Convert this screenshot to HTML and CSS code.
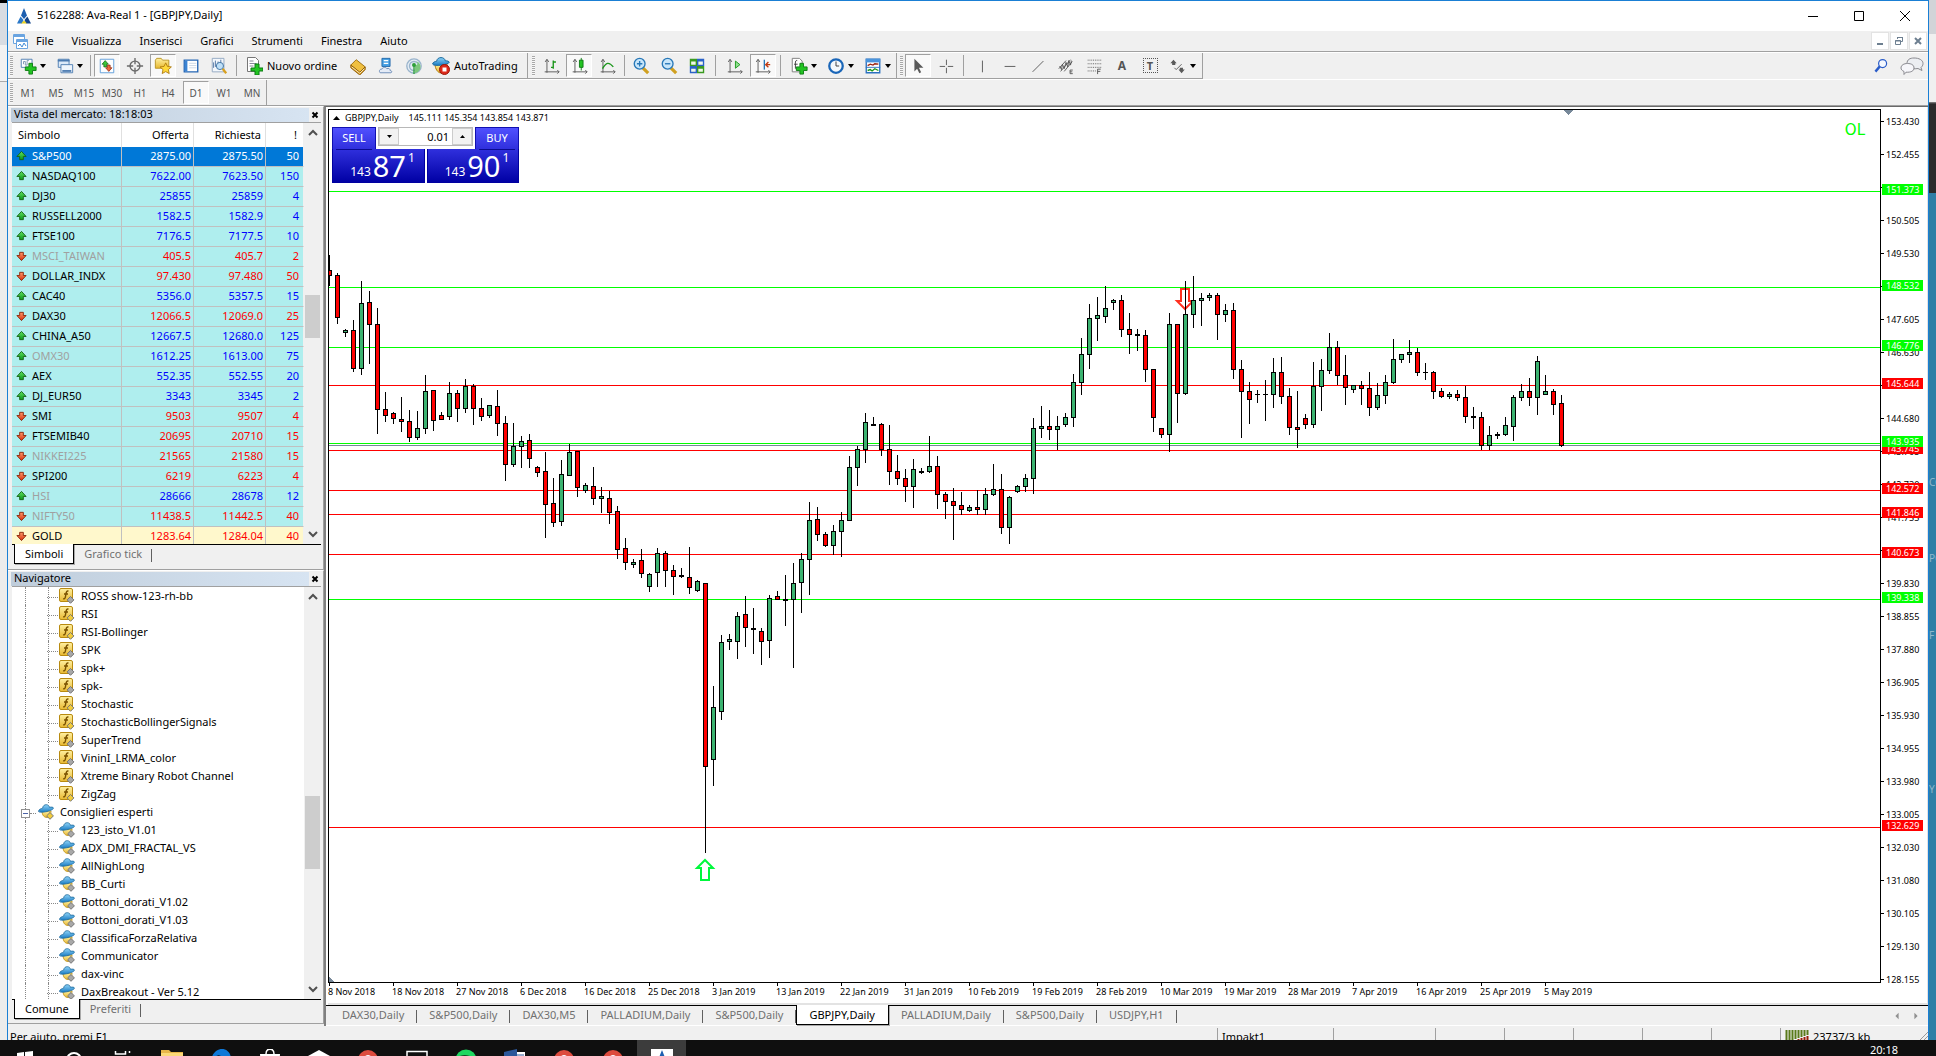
FILE: index.html
```html
<!DOCTYPE html>
<html lang="it">
<head>
<meta charset="utf-8">
<title>5162288: Ava-Real 1 - [GBPJPY,Daily]</title>
<link rel="stylesheet" href="styles.css">
</head>
<body>
<svg class="defs" aria-hidden="true">
  <defs>
    <linearGradient id="g-green" x1="0" y1="0" x2="0" y2="1"><stop offset="0" stop-color="#5fe05f"/><stop offset="1" stop-color="#0a9a1c"/></linearGradient>
    <linearGradient id="g-red" x1="0" y1="0" x2="0" y2="1"><stop offset="0" stop-color="#ff9a6a"/><stop offset="1" stop-color="#d8300c"/></linearGradient>
    <linearGradient id="g-gold" x1="0" y1="0" x2="0" y2="1"><stop offset="0" stop-color="#fff0a0"/><stop offset="1" stop-color="#e8b830"/></linearGradient>
    <linearGradient id="g-blue" x1="0" y1="0" x2="0" y2="1"><stop offset="0" stop-color="#8fd4f8"/><stop offset="1" stop-color="#1a7cc4"/></linearGradient>
  </defs>
  <symbol id="up" viewBox="0 0 12 12"><path d="M6 1 11 6.500H8V10H4V6.500H1z" fill="url(#g-green)" stroke="#146414"/></symbol>
  <symbol id="down" viewBox="0 0 12 12"><path d="M6 11 11 5.500H8V2H4V5.500H1z" fill="url(#g-red)" stroke="#8a2408"/></symbol>
  <symbol id="fx" viewBox="0 0 16 16"><rect x=".5" y=".5" width="13" height="13" rx="1.500" fill="url(#g-gold)" stroke="#b88a10"/><path d="M9.500 3.200C7.800 2.600 7.400 3.800 7.200 5L6.300 9.400C6 10.800 5.200 11 4.200 10.600M5 6h4" fill="none" stroke="#7a5200" stroke-width="1.400"/><path d="M11.500 8.500 14.900 11.900 11.500 15.300 8.100 11.900z" fill="currentColor" stroke="#777"/></symbol>
  <symbol id="ea" viewBox="0 0 16 16"><path d="M4 7C4 12 7 13.500 9 13.500S13 11 13 7z" fill="url(#g-gold)" stroke="#b88a10" stroke-width=".8"/><path d="M.6 7.600C.3 5.500 3 4.600 4.600 4.200 5 1.500 6.600.7 8.200.7s3 .8 3.200 2.600c2-.4 4-.2 4 .8 0 1.400-3 2.600-6.400 3.400S1 8.600.6 7.600z" fill="url(#g-blue)" stroke="#1d6a9c" stroke-width=".8"/><path d="M12 8.500 15.400 11.900 12 15.300 8.600 11.900z" fill="currentColor" stroke="#777"/></symbol>
  <symbol id="ava" viewBox="0 0 16 16"><path d="M8 0 5 7.500 8 11 11 7.500z" fill="#1d5fb0"/><path d="M4.600 8.500 1 15.500H6L7.500 12z" fill="#2a78c8"/><path d="M11.400 8.500 15 15.500H10L8.500 12z" fill="#14468c"/><path d="M5 15.500 8 12.500 11 15.500z" fill="#e8d020"/></symbol>
  <symbol id="chrome" viewBox="0 0 22 22"><circle cx="11" cy="11" r="10" fill="#dd4b3e"/><path d="M1 12a10 10 0 0 0 10 9l4-8-8-3z" fill="#2ea44f"/><path d="M21 9h-9l3 4-4 8a10 10 0 0 0 10-12z" fill="#f6c945"/><circle cx="11" cy="11" r="4.500" fill="#3b7de0" stroke="#fff"/></symbol>
</svg>

<div class="desktop">
  <div class="behind behind-left"></div>
  <main class="window">
    <header class="titlebar">
      <svg class="ic16" viewBox="0 0 16 16"><use href="#ava"/></svg>
      <h1>5162288: Ava-Real 1 - [GBPJPY,Daily]</h1>
      <div class="caption">
        <button aria-label="Riduci"><svg viewBox="0 0 12 12"><path d="M1 6.500h10"/></svg></button>
        <button aria-label="Ingrandisci"><svg viewBox="0 0 12 12"><path d="M1.500 1.500h9v9h-9z"/></svg></button>
        <button aria-label="Chiudi"><svg viewBox="0 0 12 12"><path d="M1 1l10 10M11 1L1 11"/></svg></button>
      </div>
    </header>

    <nav class="menubar">
      <svg class="ic16" viewBox="0 0 16 16"><path d="M1.500 1.500h11v9h-11z" fill="#fff" stroke="#6aa4e0"/><path d="M1 3h12" stroke="#6aa4e0" stroke-width="2"/><path d="M4.500 6.500h11v9h-11z" fill="#fff" stroke="#6aa4e0"/><path d="M4 8h12" stroke="#6aa4e0" stroke-width="2"/><path d="M6 13l2-2 2 3 2-4 2 3" fill="none" stroke="#3f8bd8"/></svg>
      <button>File</button><button>Visualizza</button><button>Inserisci</button><button>Grafici</button><button>Strumenti</button><button>Finestra</button><button>Aiuto</button>
      <div class="mdi">
        <button aria-label="Riduci grafico"><svg viewBox="0 0 10 10"><path d="M2 8h6" stroke-width="2"/></svg></button>
        <button aria-label="Ripristina grafico"><svg viewBox="0 0 10 10"><path d="M3.500 3V1.500h5v4H7M1.500 4.500h5v4h-5zM3 1.500h6M1 5h6"/></svg></button>
        <button aria-label="Chiudi grafico"><svg viewBox="0 0 10 10"><path d="M2 2l6 6M8 2L2 8" stroke-width="2"/></svg></button>
      </div>
    </nav>

    <div class="toolrow">
      <div class="toolbar">
        <i class="grip"></i>
        <button class="tb dd" aria-label="Nuovo grafico"><svg viewBox="0 0 20 20"><path d="M2.500 2.500h12v9h-12z" fill="#fff" stroke="#4a7ab0"/><path d="M5 8V5h2v4h2V4h2" fill="none" stroke="#7b93b0"/><path d="M11 7h4v4h4v4h-4v4h-4v-4H7v-4h4z" fill="#22c322" stroke="#0b7a12"/></svg></button>
        <button class="tb dd" aria-label="Profili"><svg viewBox="0 0 20 20"><path d="M2.500 2.500h12v9h-12z" fill="#dbe9f8" stroke="#4a7ab0"/><path d="M2 4h13" stroke="#4a7ab0" stroke-width="2"/><path d="M5.500 8.500h13v9h-13z" fill="#eef5fc" stroke="#4a7ab0"/><path d="M7 15.500h10" stroke="#4a7ab0" stroke-width="2"/></svg></button>
        <i class="sep sep-s"></i>
        <button class="tb on" aria-label="Vista del mercato"><svg viewBox="0 0 20 20"><path d="M2.500 2.500h15v15h-15z" fill="#fdfeff" stroke="#5a9ad8"/><path d="M8 4l3.500 4H9.500v3h-3V8h-2z" fill="#3ac83a" stroke="#146414" stroke-width=".8"/><path d="M12 16l-3.500-4h2V9h3v3h2z" fill="#f06a40" stroke="#8a2408" stroke-width=".8"/></svg></button>
        <button class="tb" aria-label="Finestra dati"><svg viewBox="0 0 20 20"><g fill="none" stroke="#6b6b6b" stroke-width="1.500"><circle cx="10" cy="10" r="5.500"/><path d="M10 1v7M10 12v7M1 10h7M12 10h7"/></g></svg></button>
        <button class="tb on" aria-label="Navigatore"><svg viewBox="0 0 20 20"><path d="M1.500 3.500 3 1.500h5l1.500 2h7v9h-15z" fill="url(#g-gold)" stroke="#b89220"/><path d="M13 6.500l1.900 4 4.400.5-3.300 3 .9 4.400L13 16.200l-3.900 2.200.9-4.400-3.300-3 4.400-.5z" fill="#ffd83a" stroke="#b07c10"/></svg></button>
        <button class="tb" aria-label="Terminale"><svg viewBox="0 0 20 20"><path d="M2.500 3.500h15v13h-15z" fill="#fff" stroke="#2466b4" stroke-width="1.500"/><path d="M3 4h3v12H3z" fill="#3b84d4"/><path d="M8 7h8M8 9.500h8M8 12h8" stroke="#cad6e4"/></svg></button>
        <button class="tb" aria-label="Strategy Tester"><svg viewBox="0 0 20 20"><path d="M2.500 1.500h13v15h-13z" fill="#f3f7fc" stroke="#8fa5c0"/><path d="M4 12V6m2 5V4m3 8V5m3 3V3" stroke="#4a70a0"/><circle cx="11" cy="10" r="4" fill="#bfe0f8" stroke="#3a6ea0"/><path d="M14 13l4 5" stroke="#d8a020" stroke-width="2.500"/></svg></button>
        <i class="sep sep-m"></i>
        <button class="tb wide"><svg viewBox="0 0 18 18"><path d="M2.500.5h8l3 3v11h-11z" fill="#fff" stroke="#777"/><path d="M4.500 4h4M4.500 6.500h7M4.500 9h4" stroke="#889"/><path d="M10 7h4v4h4v3h-4v4h-4v-4H6v-3h4z" fill="#22c322" stroke="#0b7a12"/></svg>Nuovo ordine</button>
        <button class="tb" aria-label="MetaEditor"><svg viewBox="0 0 20 20"><path d="M2 9l6-6 10 8-6 6z" fill="#f0c040" stroke="#9a6a08"/><path d="M2 9v3l10 8 6-6v-3l-6 6z" fill="#d89a20" stroke="#8a5a08"/><path d="M3 11l9 7 5-5" fill="none" stroke="#fff3c8"/></svg></button>
        <button class="tb" aria-label="Server virtuale"><svg viewBox="0 0 20 20"><path d="M5.500 1.500h9v9h-9z" fill="#4aa2e4" stroke="#1d64a8"/><path d="M7.500 4h5M7.500 7h5" stroke="#fff" stroke-width="1.500"/><path d="M3.500 17.500c-2-2 0-4.500 2-4 1-2.500 4.500-2.500 5.500-.5 2-1 4 .5 3.500 2 2 0 2.500 2 1 2.500z" fill="#e4ebf6" stroke="#6888b4"/></svg></button>
        <button class="tb" aria-label="Segnali"><svg viewBox="0 0 20 20"><g fill="#e4ecf4" stroke="#9ab4cc" stroke-width="1.500"><circle cx="10" cy="10" r="8"/><circle cx="10" cy="10" r="5"/></g><path d="M11 9v9c5-1 7-5 6-9-1-3-3-4-5-4 3 1 3 4-1 4z" fill="#7cc87c"/><circle cx="10" cy="9" r="2.200" fill="#2f9f3a"/><path d="M10 10v9" stroke="#2f9f3a" stroke-width="1.500"/></svg></button>
        <button class="tb wide auto"><svg viewBox="0 0 18 18"><path d="M3 7c0 5 3 9 6 9s6-4 6-9z" fill="url(#g-gold)" stroke="#b07c10"/><path d="M.6 7C1 5 3 4.500 4.600 4.300 5 1.500 7 .6 9 .6s4 1 4.200 3.200c2 0 4 .4 4 1.600C17 7.500 1.500 10 .6 7z" fill="url(#g-blue)" stroke="#1d6a9c"/><circle cx="12.500" cy="12.500" r="5" fill="#dd2a1a" stroke="#9a1408"/><path d="M10.500 10.500h4v4h-4z" fill="#fff"/></svg>AutoTrading</button>
      </div>
      <div class="toolbar second">
        <i class="grip"></i>
        <button class="tb" aria-label="Grafico a barre"><svg viewBox="0 0 20 20"><path d="M5.500 3v14.500M3 16.500h16M3.500 5.500l2-3 2 3M17 14.500l2 2-2 2" class="axis"/><path d="M12.500 4v9M12.500 5.500h3M10 11.500h2.500" fill="none" stroke="#1a961a" stroke-width="1.500"/></svg></button>
        <button class="tb on" aria-label="Candele"><svg viewBox="0 0 20 20"><path d="M5.500 3v14.500M3 16.500h16M3.500 5.500l2-3 2 3M17 14.500l2 2-2 2" class="axis"/><path d="M12.500 1v14" stroke="#0b7a12"/><path d="M10.500 3.500h4v8h-4z" fill="#22c322" stroke="#0b7a12"/></svg></button>
        <button class="tb" aria-label="Linea"><svg viewBox="0 0 20 20"><path d="M5.500 3v14.500M3 16.500h16M3.500 5.500l2-3 2 3M17 14.500l2 2-2 2" class="axis"/><path d="M5 13c4-7 7-8 12-2" fill="none" stroke="#1a961a" stroke-width="1.500"/></svg></button>
        <i class="sep sep-m"></i>
        <button class="tb" aria-label="Ingrandisci"><svg viewBox="0 0 20 20"><path d="M12 12l6 6" stroke="#d0a020" stroke-width="3.500"/><circle cx="8.500" cy="7.500" r="6" fill="#c8e6fa" stroke="#2878b8" stroke-width="1.500"/><path d="M5.500 7.500h6M8.500 4.500v6" stroke="#2878b8" stroke-width="1.500"/></svg></button>
        <button class="tb" aria-label="Riduci"><svg viewBox="0 0 20 20"><path d="M12 12l6 6" stroke="#d0a020" stroke-width="3.500"/><circle cx="8.500" cy="7.500" r="6" fill="#c8e6fa" stroke="#2878b8" stroke-width="1.500"/><path d="M5.500 7.500h6" stroke="#2878b8" stroke-width="1.500"/></svg></button>
        <button class="tb" aria-label="Affianca"><svg viewBox="0 0 20 20"><path d="M2 2h8v8H2zM10 10h8v8h-8z" fill="#3a9a20"/><path d="M10 2h8v8h-8zM2 10h8v8H2z" fill="#2a62c8"/><path d="M3.500 5h5v3.500h-5zM11.500 5h5v3.500h-5zM3.500 13h5v3.500h-5zM11.500 13h5v3.500h-5z" fill="#f0f6ea"/></svg></button>
        <i class="sep sep-l"></i>
        <button class="tb" aria-label="Scorrimento automatico"><svg viewBox="0 0 20 20"><path d="M4.500 3v14.500M2 16.500h16M2.500 5.500l2-3 2 3M16 14.500l2 2-2 2" class="axis"/><path d="M10.500 4.500l5 4-5 4z" fill="#8fe08f" stroke="#1a961a"/></svg></button>
        <button class="tb on" aria-label="Spostamento grafico"><svg viewBox="0 0 20 20"><path d="M4.500 3v14.500M2 16.500h16M2.500 5.500l2-3 2 3M16 14.500l2 2-2 2" class="axis"/><path d="M11.500 3v11" stroke="#2878b8" stroke-width="1.500"/><path d="M18 8.500h-4M16 5.500l-3 3 3 3" fill="none" stroke="#c03a10" stroke-width="1.500"/></svg></button>
        <i class="sep sep-c"></i>
        <button class="tb dd" aria-label="Indicatori"><svg viewBox="0 0 20 20"><path d="M2.500 1.500h8l3 3v12h-11z" fill="#fff" stroke="#777"/><path d="M8 4c-2-.5-2 1-2 3v6M4.500 8h4" fill="none" stroke="#333"/><path d="M11 7h4v4h4v4h-4v4h-4v-4H7v-4h4z" fill="#22c322" stroke="#0b7a12"/></svg></button>
        <button class="tb dd" aria-label="Periodi"><svg viewBox="0 0 20 20"><circle cx="10" cy="10" r="7.500" fill="#f4f8fc" stroke="#1a66b8" stroke-width="2.500"/><path d="M10 5v5h3.500" fill="none" stroke="#333"/></svg></button>
        <button class="tb dd" aria-label="Modelli"><svg viewBox="0 0 20 20"><path d="M2.500 2.500h15v15h-15z" fill="#fff" stroke="#2a70c0" stroke-width="1.500"/><path d="M2 4h16" stroke="#4a94dc" stroke-width="4"/><path d="M4 9.500l3-1.500 3 1 2-1.500 4 .5" fill="none" stroke="#9a2410" stroke-width="1.500"/><path d="M2 11.500h16" stroke="#2a70c0"/><path d="M4 15l3-1 2 1.500 3-2.500 4 2" fill="none" stroke="#1a961a" stroke-width="1.500"/></svg></button>
      </div>
      <div class="toolbar third">
        <i class="grip"></i>
        <button class="tb on" aria-label="Cursore"><svg viewBox="0 0 20 20"><path d="M6 2v14l3-3 2.500 5 2-1-2.500-5h5z" fill="#5a5a5a"/></svg></button>
        <button class="tb" aria-label="Mirino"><svg viewBox="0 0 20 20"><path d="M10.500 3v6M10.500 12v6M3 10.500h6M12 10.500h6" class="axis"/></svg></button>
        <i class="sep sep-c"></i>
        <button class="tb" aria-label="Linea verticale"><svg viewBox="0 0 20 20"><path d="M10.500 4v13" class="axis"/></svg></button>
        <button class="tb" aria-label="Linea orizzontale"><svg viewBox="0 0 20 20"><path d="M4 10.500h12" class="axis"/></svg></button>
        <button class="tb" aria-label="Trendline"><svg viewBox="0 0 20 20"><path d="M4 16.500 16 4.500" class="axis"/></svg></button>
        <button class="tb" aria-label="Canale"><svg viewBox="0 0 20 20"><path d="M2 13 10 4M4 16 15 3M8 16l9-11M3 10l2 4 1-6 2 5 2-7 2 5 1-7 2 5 1-5" class="axis"/><path d="M17.500 14.500h-3v4h3M14.500 16.500H17" class="axis"/></svg></button>
        <button class="tb" aria-label="Fibonacci"><svg viewBox="0 0 20 20"><path d="M3 3.500h15M3 7.500h15M3 11.500h15M3 15.500h9" stroke="#555" stroke-dasharray="1 1"/><path d="M17.500 13.500h-3.500v5.500M14 16h3" class="axis"/></svg></button>
        <button class="tb letter" aria-label="Testo">A</button>
        <button class="tb letter boxed" aria-label="Etichetta"><span>T</span></button>
        <button class="tb dd tail" aria-label="Frecce"><svg viewBox="0 0 20 20"><path d="M5 3l3.500 4H7v2H3.500V7H1.500zM14 18l-3.500-4H12v-2h3.500v2h2z" fill="#5a5a5a"/><path d="M6 12l2 2 6-6" class="axis"/></svg></button>
      </div>
      <div class="tool-right">
        <svg class="ic16" viewBox="0 0 20 20"><circle cx="12" cy="7" r="5" fill="#f4f8ff" stroke="#2a5cc8" stroke-width="1.500"/><path d="M8.500 10.500 3 17" stroke="#2a5cc8" stroke-width="3"/></svg>
        <svg class="ic24" viewBox="0 0 24 20"><path d="M14 2c5 0 9 2 9 5.500 0 2-1 3-2 4l1 3-4-2c-6 1-11-1-11-5S10 2 14 2z" fill="#eceef2" stroke="#8a8a90"/><path d="M7.500 7.500c4 0 6.500 1.500 6.500 4.500s-3 4.500-8 4.200L4 18.500v-3C2 14.500 1 13.500 1 12c0-3 3-4.500 6.500-4.500z" fill="#f6f6fa" stroke="#8a8a90"/></svg>
      </div>
    </div>

    <div class="toolrow frames">
      <div class="toolbar">
        <i class="grip"></i>
        <button class="tf">M1</button><button class="tf">M5</button><button class="tf">M15</button><button class="tf">M30</button><button class="tf">H1</button><button class="tf">H4</button><button class="tf on">D1</button><button class="tf">W1</button><button class="tf">MN</button>
      </div>
    </div>

    <div class="workspace">
      <aside class="side">
        <section class="panel market">
          <h2><span>Vista del mercato: 18:18:03</span><button aria-label="Chiudi vista del mercato"><svg viewBox="0 0 8 8"><path d="M1.500 1.500l5 5M6.500 1.500l-5 5"/></svg></button></h2>
          <div class="scrollbox">
            <table>
              <colgroup><col class="c-sym"><col class="c-num"><col class="c-num"><col></colgroup>
              <thead><tr><th>Simbolo</th><th>Offerta</th><th>Richiesta</th><th>!</th></tr></thead>
              <tbody>
                <tr class="u sel"><td><svg><use href="#up"/></svg>S&amp;P500</td><td>2875.00</td><td>2875.50</td><td>50</td></tr>
                <tr class="u"><td><svg><use href="#up"/></svg>NASDAQ100</td><td>7622.00</td><td>7623.50</td><td>150</td></tr>
                <tr class="u"><td><svg><use href="#up"/></svg>DJ30</td><td>25855</td><td>25859</td><td>4</td></tr>
                <tr class="u"><td><svg><use href="#up"/></svg>RUSSELL2000</td><td>1582.5</td><td>1582.9</td><td>4</td></tr>
                <tr class="u"><td><svg><use href="#up"/></svg>FTSE100</td><td>7176.5</td><td>7177.5</td><td>10</td></tr>
                <tr class="d off"><td><svg><use href="#down"/></svg>MSCI_TAIWAN</td><td>405.5</td><td>405.7</td><td>2</td></tr>
                <tr class="d"><td><svg><use href="#down"/></svg>DOLLAR_INDX</td><td>97.430</td><td>97.480</td><td>50</td></tr>
                <tr class="u"><td><svg><use href="#up"/></svg>CAC40</td><td>5356.0</td><td>5357.5</td><td>15</td></tr>
                <tr class="d"><td><svg><use href="#down"/></svg>DAX30</td><td>12066.5</td><td>12069.0</td><td>25</td></tr>
                <tr class="u"><td><svg><use href="#up"/></svg>CHINA_A50</td><td>12667.5</td><td>12680.0</td><td>125</td></tr>
                <tr class="u off"><td><svg><use href="#up"/></svg>OMX30</td><td>1612.25</td><td>1613.00</td><td>75</td></tr>
                <tr class="u"><td><svg><use href="#up"/></svg>AEX</td><td>552.35</td><td>552.55</td><td>20</td></tr>
                <tr class="u"><td><svg><use href="#up"/></svg>DJ_EUR50</td><td>3343</td><td>3345</td><td>2</td></tr>
                <tr class="d"><td><svg><use href="#down"/></svg>SMI</td><td>9503</td><td>9507</td><td>4</td></tr>
                <tr class="d"><td><svg><use href="#down"/></svg>FTSEMIB40</td><td>20695</td><td>20710</td><td>15</td></tr>
                <tr class="d off"><td><svg><use href="#down"/></svg>NIKKEI225</td><td>21565</td><td>21580</td><td>15</td></tr>
                <tr class="d"><td><svg><use href="#down"/></svg>SPI200</td><td>6219</td><td>6223</td><td>4</td></tr>
                <tr class="u off"><td><svg><use href="#up"/></svg>HSI</td><td>28666</td><td>28678</td><td>12</td></tr>
                <tr class="d off"><td><svg><use href="#down"/></svg>NIFTY50</td><td>11438.5</td><td>11442.5</td><td>40</td></tr>
                <tr class="d gold"><td><svg><use href="#down"/></svg>GOLD</td><td>1283.64</td><td>1284.04</td><td>40</td></tr>
              </tbody>
            </table>
            <div class="scroll"><svg viewBox="0 0 10 8"><path d="M1 6l4-4 4 4"/></svg><i class="thumb"></i><svg viewBox="0 0 10 8"><path d="M1 2l4 4 4-4"/></svg></div>
          </div>
          <div class="tabs"><button class="active">Simboli</button><button>Grafico tick</button></div>
        </section>

        <section class="panel nav">
          <h2><span>Navigatore</span><button aria-label="Chiudi navigatore"><svg viewBox="0 0 8 8"><path d="M1.500 1.500l5 5M6.500 1.500l-5 5"/></svg></button></h2>
          <div class="scrollbox">
            <ul class="tree">
              <li class="grey"><svg><use href="#fx"/></svg>ROSS show-123-rh-bb</li>
              <li><svg><use href="#fx"/></svg>RSI</li>
              <li><svg><use href="#fx"/></svg>RSI-Bollinger</li>
              <li class="grey"><svg><use href="#fx"/></svg>SPK</li>
              <li class="grey"><svg><use href="#fx"/></svg>spk+</li>
              <li class="grey"><svg><use href="#fx"/></svg>spk-</li>
              <li><svg><use href="#fx"/></svg>Stochastic</li>
              <li><svg><use href="#fx"/></svg>StochasticBollingerSignals</li>
              <li class="grey"><svg><use href="#fx"/></svg>SuperTrend</li>
              <li class="grey"><svg><use href="#fx"/></svg>VininI_LRMA_color</li>
              <li class="grey"><svg><use href="#fx"/></svg>Xtreme Binary Robot Channel</li>
              <li><svg><use href="#fx"/></svg>ZigZag</li>
              <li class="parent"><button aria-label="Comprimi"></button><svg><use href="#ea"/></svg>Consiglieri esperti</li>
              <li class="grey"><svg><use href="#ea"/></svg>123_isto_V1.01</li>
              <li class="grey"><svg><use href="#ea"/></svg>ADX_DMI_FRACTAL_VS</li>
              <li class="grey"><svg><use href="#ea"/></svg>AllNighLong</li>
              <li class="grey"><svg><use href="#ea"/></svg>BB_Curti</li>
              <li class="grey"><svg><use href="#ea"/></svg>Bottoni_dorati_V1.02</li>
              <li class="grey"><svg><use href="#ea"/></svg>Bottoni_dorati_V1.03</li>
              <li class="grey"><svg><use href="#ea"/></svg>ClassificaForzaRelativa</li>
              <li class="grey"><svg><use href="#ea"/></svg>Communicator</li>
              <li class="grey"><svg><use href="#ea"/></svg>dax-vinc</li>
              <li class="grey"><svg><use href="#ea"/></svg>DaxBreakout - Ver 5.12</li>
            </ul>
            <div class="scroll"><svg viewBox="0 0 10 8"><path d="M1 6l4-4 4 4"/></svg><i class="thumb"></i><svg viewBox="0 0 10 8"><path d="M1 2l4 4 4-4"/></svg></div>
          </div>
          <div class="tabs"><button class="active">Comune</button><button>Preferiti</button></div>
        </section>
      </aside>

      <section class="charts">
        <div class="chart">
          <div class="plot">
            <svg class="canvas">
              <g class="levels">
                <path class="lv-g" d="M0 81.500h4000M0 177.500h4000M0 237.500h4000M0 333.500h4000M0 489.500h4000"/>
                <path class="lv-b" d="M0 335.500h4000"/>
                <path class="lv-r" d="M0 275.500h4000M0 340.500h4000M0 380.500h4000M0 404.500h4000M0 444.500h4000M0 717.500h4000"/>
              </g>
              <path class="sell-mark" d="M852 179h8v12h4l-8 8-8-8h4z"/>
              <path class="ink" id="ink"/><path class="bear" id="bear"/><path class="bull" id="bull"/>
              <path class="buy-mark" d="M372 770h8v-12h4l-8-8-8 8h4z"/>
              <path class="shift" d="M1234 0h10l-5 5zM0 867l5 5H0z"/>
            </svg>
            <div class="ohlc"><svg viewBox="0 0 7 4"><path d="M0 4 3.500 0 7 4z"/></svg><span>GBPJPY,Daily</span><span>145.111 145.354 143.854 143.871</span></div>
            <form class="oneclick">
              <button type="button" class="side-btn">SELL</button>
              <div class="lots">
                <button type="button" aria-label="Diminuisci"><svg viewBox="0 0 7 4"><path d="M1 0h5L3.500 3z"/></svg></button>
                <input aria-label="Volume" value="0.01">
                <button type="button" aria-label="Aumenta"><svg viewBox="0 0 7 4"><path d="M1 3h5L3.500 0z"/></svg></button>
              </div>
              <button type="button" class="side-btn">BUY</button>
              <div class="quote"><small>143</small><b>87</b><sup>1</sup></div>
              <div class="quote"><small>143</small><b>90</b><sup>1</sup></div>
            </form>
            <strong class="ol">OL</strong>
          </div>
          <div class="prices">
            <ol>
              <li>153.430</li><li>152.455</li><li>151.480</li><li>150.505</li><li>149.530</li><li>148.555</li><li>147.605</li><li>146.630</li><li>145.655</li><li>144.680</li><li>143.705</li><li>142.730</li><li>141.755</li><li>140.780</li><li>139.830</li><li>138.855</li><li>137.880</li><li>136.905</li><li>135.930</li><li>134.955</li><li>133.980</li><li>133.005</li><li>132.030</li><li>131.080</li><li>130.105</li><li>129.130</li><li>128.155</li>
            </ol>
            <span class="tag g" style="top:75px">151.373</span>
            <span class="tag g" style="top:171px">148.532</span>
            <span class="tag g" style="top:231px">146.776</span>
            <span class="tag r" style="top:269px">145.644</span>
            <span class="tag r" style="top:334px">143.745</span>
            <span class="tag g" style="top:327px">143.935</span>
            <span class="tag r" style="top:374px">142.572</span>
            <span class="tag r" style="top:398px">141.846</span>
            <span class="tag r" style="top:438px">140.673</span>
            <span class="tag g" style="top:483px">139.338</span>
            <span class="tag r" style="top:711px">132.629</span>
          </div>
          <ol class="dates">
            <li>8 Nov 2018</li><li>18 Nov 2018</li><li>27 Nov 2018</li><li>6 Dec 2018</li><li>16 Dec 2018</li><li>25 Dec 2018</li><li>3 Jan 2019</li><li>13 Jan 2019</li><li>22 Jan 2019</li><li>31 Jan 2019</li><li>10 Feb 2019</li><li>19 Feb 2019</li><li>28 Feb 2019</li><li>10 Mar 2019</li><li>19 Mar 2019</li><li>28 Mar 2019</li><li>7 Apr 2019</li><li>16 Apr 2019</li><li>25 Apr 2019</li><li>5 May 2019</li>
          </ol>
        </div>
        <div class="tabs chart-tabs">
          <button>DAX30,Daily</button><button>S&amp;P500,Daily</button><button>DAX30,M5</button><button>PALLADIUM,Daily</button><button>S&amp;P500,Daily</button><button class="active">GBPJPY,Daily</button><button>PALLADIUM,Daily</button><button>S&amp;P500,Daily</button><button>USDJPY,H1</button>
          <span class="tabscroll"><svg viewBox="0 0 5 8"><path d="M4.500 0v8L.5 4z"/></svg><svg viewBox="0 0 5 8"><path d="M.5 0v8l4-4z"/></svg></span>
        </div>
      </section>
    </div>

    <footer class="status">
      <span class="help">Per aiuto, premi F1</span><span class="s3">Impakt1</span><span class="s2"></span><span class="s1"></span><span class="s1"></span><span class="s1"></span><span class="s1"></span><span class="s1"></span>
      <span class="net"><svg viewBox="0 0 24 12"><path d="M1.500 0v12M4.500 0v12M7.500 0v10M10.500 0v9M13.500 0v8M16.500 0v7M19.500 0v6M22.500 0v5" stroke="#5a7a1a" stroke-width="2"/><path d="M7.500 11v1M10.500 10v2M13.500 9v3M16.500 8v4M19.500 7v5M22.500 6v6" stroke="#9a1c08" stroke-width="2"/></svg>23737/3 kb</span>
      <svg class="sizer" viewBox="0 0 10 8"><path d="M1 9 10 0M5 9l5-5" stroke="#999" fill="none"/></svg>
    </footer>
  </main>
  <div class="behind behind-right"><span style="top:474px">CC</span><span style="top:550px">PC</span><span style="top:627px">F</span><span style="top:781px">Y</span></div>
</div>

<div class="taskbar">
  <button aria-label="Start"><svg viewBox="0 0 22 22"><path d="M3 4l7-1v8H3zM11 3l8-1v9h-8zM3 12h7v8l-7-1zM11 12h8v9l-8-1z" fill="#fff"/></svg></button>
  <button aria-label="Cerca"><svg viewBox="0 0 22 22"><circle cx="11" cy="11" r="7" fill="none" stroke="#fff" stroke-width="2"/></svg></button>
  <button aria-label="Visualizzazione attività"><svg viewBox="0 0 22 22"><path d="M3.500 2v3h10V2M17.500 2v2M17.500 7v12M3.500 8.500h10v8h-10z" fill="none" stroke="#fff" stroke-width="1.500"/></svg></button>
  <button aria-label="Esplora file"><svg viewBox="0 0 22 22"><path d="M0 1h8l2 2h12v18H0z" fill="#e8b64a"/><path d="M0 4h22v17H0z" fill="#fbd878"/></svg></button>
  <button aria-label="Edge"><svg viewBox="0 0 22 22"><path d="M1 12C2 4 7 0 12 0s9 4 9 10v3H8c1 5 8 5 12 2v5C10 24 2 20 4 12c1-3 4-5 7-6-5 0-8 3-10 6z" fill="#0f78d7"/></svg></button>
  <button aria-label="Store"><svg viewBox="0 0 22 22"><path d="M7 5C7-1.500 15-1.500 15 5" fill="none" stroke="#fff" stroke-width="1.500"/><path d="M1 5h20l-1 15H2z" fill="#fff"/></svg></button>
  <button aria-label="Dropbox"><svg viewBox="0 0 22 22"><path d="M11 1 22 7 11 14 0 7z" fill="#fff"/></svg></button>
  <button aria-label="Chrome"><svg viewBox="0 0 22 22"><use href="#chrome"/></svg></button>
  <button aria-label="Desktop remoto"><svg viewBox="0 0 22 22"><path d="M1 2.500h20v14H1z" fill="#111" stroke="#fff" stroke-width="1.500"/></svg></button>
  <button aria-label="Spotify"><svg viewBox="0 0 22 22"><circle cx="11" cy="11" r="10.500" fill="#1ed760"/><path d="M5 8c4-1.500 8-1 12 1" fill="none" stroke="#111" stroke-width="2"/></svg></button>
  <button aria-label="Word"><svg viewBox="0 0 22 22"><path d="M12 3h9v16h-9z" fill="#fff"/><path d="M12 6h8M12 9h8" stroke="#2b579a"/><path d="M0 3 13 0v22L0 19z" fill="#2b579a"/><path d="M3 8l2 7 2-6 2 6 2-7" fill="none" stroke="#fff" stroke-width="1.500"/></svg></button>
  <button aria-label="Chrome profilo 2"><svg viewBox="0 0 22 22"><use href="#chrome"/></svg></button>
  <button aria-label="Chrome profilo 3"><svg viewBox="0 0 22 22"><use href="#chrome"/></svg></button>
  <button class="current" aria-label="MetaTrader"><svg viewBox="0 0 22 22"><path d="M0 0h22v22H0z" fill="#fff"/><path d="M11 1 7 11l4 4 4-4z" fill="#1d5fb0"/></svg></button>
  <time>20:18</time>
</div>
<script src="chart.js"></script>
</body>
</html>
```
FILE: styles.css
```css
* { box-sizing: border-box; margin: 0; padding: 0; }
:root { --ui: "Noto Sans", "Open Sans", sans-serif; --face: #f0f0f0; --line: #a0a0a0; }
body { height: 100vh; display: flex; flex-direction: column; overflow: hidden; font: 11px/16px var(--ui); color: #000; background: #0f0f0f; }
button, input { font: inherit; color: inherit; background: none; border: 0; white-space: nowrap; }
ol, ul { list-style: none; }
svg { flex: none; display: block; }
.defs { position: absolute; width: 0; height: 0; }
.ic16 { width: 16px; height: 16px; }
.ic24 { width: 24px; height: 20px; }

.desktop { flex: 1; min-height: 0; display: flex; overflow: hidden; }
.behind { width: 7px; position: relative; overflow: hidden; }
.behind-left { background: linear-gradient(#000 3px, #d8dce2 3px, #d8dce2 45px, #f2f2f2 45px, #f2f2f2 81px, #aaa 81px, #aaa 82px, #ececec 82px); }
.behind-right { background: linear-gradient(#d2d4d8 34px, #f0f0f0 34px, #f0f0f0 102px, #8c8c8c 102px, #2b2b2b 104px, #2b2b2b 193px, #2f7fa6 193px); color: #8fb8cc; }
.behind-right span { position: absolute; left: 0; font-size: 10px; }
.window { flex: 1; min-width: 0; display: flex; flex-direction: column; background: var(--face); border: 1px solid #1a7fd4; border-bottom: 0; }

.titlebar { height: 30px; display: flex; align-items: center; gap: 5px; padding-left: 8px; background: #fff; }
.titlebar h1 { flex: 1; font-size: 11px; font-weight: 400; line-height: 14px; padding-bottom: 2px; }
.caption { display: flex; }
.caption button { width: 46px; height: 28px; display: grid; place-items: center; }
.caption svg { width: 12px; height: 12px; fill: none; stroke: #000; }

.menubar { height: 21px; display: flex; align-items: center; padding-left: 4px; border-bottom: 1px solid var(--line); }
.menubar > button { padding: 0 9px; }
.menubar > .ic16 { margin-right: -1px; }
.mdi { margin-left: auto; display: flex; gap: 1px; padding-right: 1px; }
.mdi button { width: 18px; height: 18px; display: grid; place-items: center; background: #fff; border: 1px solid #e3e3e3; }
.mdi svg { width: 10px; height: 10px; fill: none; stroke: #6d7f90; }

.toolrow { height: 27px; display: flex; border-top: 1px solid #fff; }
.toolbar { display: flex; align-items: center; padding-left: 2px; border-right: 1px solid var(--line); border-bottom: 1px solid var(--line); }
.grip { width: 3px; height: 20px; margin-right: 1px; background: repeating-linear-gradient(#a8a8a8 0 1px, #f8f8f8 1px 2px); }
.second { padding-left: 4px; }
.second .grip { margin-right: 2px; }
.third { padding-left: 3px; }
.tb { width: 26px; height: 23px; margin: 0 1px; display: grid; place-items: center; }
.tb svg { width: 18px; height: 18px; }
.axis { fill: none; stroke: #555; }
.on { background: #f9f9f9; border: 1px solid #fff; border-top-color: var(--line); border-left-color: var(--line); }
.dd { width: 36px; margin-right: 0; display: flex; align-items: center; padding-left: 4px; gap: 3px; }
.dd::after { content: ""; border: 3px solid transparent; border-top: 4px solid #000; border-bottom: 0; }
.dd.tail { width: 37px; }
.wide { width: 103px; display: flex; align-items: center; gap: 4px; padding-left: 5px; }
.auto { width: 97px; padding-left: 3px; }
.sep { width: 1px; height: 21px; background: var(--line); }
.sep-s { margin: 0 2px; }
.sep-m { margin: 0 2px 0 3px; }
.sep-l { margin: 0 5px 0 4px; }
.sep-c { margin: 0 4px 0 3px; }
.letter { color: #555; font-weight: 700; font-size: 12px; }
.boxed span { width: 15px; height: 15px; line-height: 13px; font-size: 11px; border: 1px dotted #555; }
.tool-right { margin-left: auto; display: flex; align-items: center; gap: 11px; padding-right: 4px; }
.frames { height: 26px; }
.frames .toolbar { border-bottom: 0; }
.tf { width: 26px; height: 23px; margin: 0 1px; font-size: 10px; color: #555; }

.workspace { flex: 1; min-height: 0; display: flex; border-top: 1px solid var(--line); }
.side { width: 316px; display: flex; flex-direction: column; }
.panel { display: flex; flex-direction: column; padding: 1px 2px 0 3px; border-right: 1px solid var(--line); border-bottom: 1px solid var(--line); border-top: 1px solid #fff; }
.market { height: 464px; }
.nav { flex: 1; min-height: 0; margin-bottom: 2px; }
.panel h2 { height: 14px; display: flex; align-items: center; justify-content: space-between; font-weight: 400; font-size: 11px; line-height: 12px; }
.panel h2 span { flex: 1; height: 14px; padding-left: 3px; background: linear-gradient(90deg, #bfcddb, #d7e4f2); }
.panel h2 button { width: 12px; height: 14px; display: grid; place-items: center; }
.panel h2 svg { width: 8px; height: 8px; stroke: #000; stroke-width: 2; }
.scrollbox { flex: 1; min-height: 0; display: flex; overflow: hidden; margin-left: 1px; border-top: 1px solid var(--line); background: #fff; }
.scroll { width: 17px; display: flex; flex-direction: column; align-items: center; padding: 6px 0; background: var(--face); }
.scroll svg { width: 10px; height: 8px; fill: none; stroke: #505050; stroke-width: 2; }
.thumb { width: 15px; margin-bottom: auto; background: #cdcdcd; }
.market .thumb { height: 43px; margin-top: 158px; }
.nav .thumb { height: 73px; margin-top: 195px; }

table { flex: 1; align-self: flex-start; table-layout: fixed; border-collapse: separate; border-spacing: 0; }
.c-sym { width: 110px; }
.c-num { width: 72px; }
th { height: 24px; font-weight: 400; text-align: right; padding-right: 4px; border-right: 1px solid #e0e0e0; }
th:first-child { text-align: left; padding-left: 6px; }
td { height: 20px; line-height: 16px; text-align: right; padding: 0 2px 1px 0; white-space: nowrap; background: #afeeee; border-right: 1px solid #c0c0c0; border-bottom: 1px solid #c0c0c0; }
td:last-child, th:last-child { padding-right: 4px; border-right-color: #f0f0f0; }
th:last-child { padding-right: 6px; }
td:first-child { display: flex; align-items: center; gap: 5px; padding-left: 4px; }
td svg { width: 11px; height: 12px; }
.u td { color: #00f; }
.d td { color: #f00; }
tr td:first-child { color: #000; }
tr.off td:first-child { color: #a0a0a0; }
tr.sel td, tr.sel td:first-child { background: #0078d7; color: #fff; }
.gold td { background: #fff8cc; }

.tabs { display: flex; border-top: 1px solid #000; }
.tabs button { height: 18px; line-height: 16px; padding: 0 10px; color: #707070; position: relative; }
.tabs button:not(.active)::after { content: ""; position: absolute; right: 0; top: 4px; height: 13px; border-right: 1px solid #606060; }
.tabs .active { margin-top: -1px; height: 20px; color: #000; background: #fff; border: 1px solid #000; border-top: 0; box-shadow: 1px 1px #aaa; }
.panel .tabs { margin-left: 1px; padding-left: 2px; height: 24px; }
.market .tabs { height: 25px; }

.tree { flex: 1; }
.tree li { height: 18px; display: flex; align-items: center; gap: 6px; padding-left: 47px; position: relative; white-space: nowrap; }
.tree svg { width: 16px; height: 16px; color: #f2cc3a; }
.tree .grey svg { color: #a8a8a8; }
.tree li::before { content: ""; position: absolute; left: 13px; width: 22px; top: 0; bottom: 0; border: dotted #888; border-width: 0 1px; }
.tree li::after { content: ""; position: absolute; left: 35px; width: 11px; top: 10px; border-top: 1px dotted #888; }
.tree .parent { padding-left: 26px; }
.tree .parent::before { border-right: 0; }
.tree .parent::after { left: 18px; width: 6px; }
.tree .parent button { position: absolute; left: 9px; top: 6px; width: 9px; height: 9px; border: 1px solid #919191; background: linear-gradient(#4b63a7, #4b63a7) center / 5px 1px no-repeat #fff; z-index: 1; }

.charts { flex: 1; min-width: 0; display: flex; flex-direction: column; border-left: 2px solid #808080; border-top: 1px solid #696969; }
.chart { flex: 1; min-height: 0; display: grid; grid-template: 1fr 22px / 1fr 46px; padding: 2px 0 0 2px; background: #fff; border-right: 1px solid #e3e3e3; }
.plot { position: relative; overflow: hidden; border: 1px solid #000; }
.canvas { width: 100%; height: 100%; shape-rendering: crispEdges; }
.levels path { fill: none; }
.lv-g { stroke: #0f0; }
.lv-r { stroke: #f00; }
.lv-b { stroke: #778899; }
.ink { fill: #000; }
.bear { fill: #f00; }
.bull { fill: #3cb371; }
.sell-mark { fill: #fff; stroke: #ff3020; stroke-width: 2; shape-rendering: auto; }
.buy-mark { fill: none; stroke: #00f83c; stroke-width: 2; shape-rendering: auto; }
.shift { fill: #778899; }
.ohlc { position: absolute; left: 4px; top: 2px; display: flex; align-items: center; gap: 6px; font-size: 9px; line-height: 12px; }
.ohlc svg { width: 7px; height: 4px; margin-right: -1px; }
.ohlc span:last-child { padding-left: 4px; }
.oneclick { position: absolute; left: 3px; top: 17px; width: 187px; display: grid; grid-template: 22px 34px / 1fr 92px; column-gap: 2px; color: #fff; }
.side-btn { width: 44px; grid-row: 1; background: linear-gradient(#5050ff, #3030dd); border: 1px solid #1010b0; border-bottom: 0; position: relative; z-index: 1; line-height: 18px; padding-bottom: 2px; }
.side-btn:nth-of-type(1) { grid-column: 1; }
form > .side-btn ~ .side-btn { grid-column: 2; justify-self: end; }
.side-btn::after { content: ""; position: absolute; left: 3px; right: 3px; bottom: -1px; border-bottom: 1px solid #0a0a90; }
.lots { grid-area: 1 / 1 / 2 / 3; justify-self: center; width: 95px; height: 19px; display: flex; background: #fff; border: 1px solid #b8b8b8; color: #000; }
.lots button { width: 20px; display: grid; place-items: center; background: #f2f2f2; border: 1px solid #ccc; }
.lots svg { width: 7px; height: 4px; }
.lots input { flex: 1; min-width: 0; text-align: right; padding-right: 3px; }
.quote { display: flex; align-items: flex-end; justify-content: center; gap: 2px; height: 34px; line-height: 34px; padding: 0 0 0 8px; background: linear-gradient(#3030dd, #0000a4); border: 1px solid #0000a0; border-top: 0; }
.quote small { font-size: 12px; line-height: 20px; }
.quote b { font-size: 29px; font-weight: 400; line-height: 32px; }
.quote sup { font-size: 12px; line-height: 18px; align-self: flex-start; }
.ol { position: absolute; right: 15px; top: 11px; color: #0f0; font: 15px/18px "DejaVu Sans", sans-serif; }

.prices { position: relative; overflow: hidden; font-size: 9px; }
.prices ol { margin-top: -4px; }
.prices li { height: 33px; line-height: 33px; padding-left: 5px; background: linear-gradient(#000, #000) 0 50% / 3px 1px no-repeat; }
.tag { position: absolute; left: 1px; width: 41px; height: 11px; line-height: 12px; padding-left: 4px; color: #fff; }
.tag.g { background: #0f0; }
.tag.r { background: #f00; }
.dates { grid-column: 1 / 3; display: flex; overflow: hidden; font-size: 9px; border-bottom: 2px solid #e3e3e3; }
.dates li { flex: none; width: 64px; white-space: nowrap; line-height: 18px; background: linear-gradient(#000, #000) 1px 0 / 1px 3px no-repeat; }
.chart-tabs { height: 21px; padding-left: 4px; border-bottom: 1px solid #fff; }
.chart-tabs button { padding: 0 13px 0 12px; }
.tabscroll { margin-left: auto; display: flex; gap: 15px; align-items: center; padding-right: 10px; }
.tabscroll svg { width: 4px; height: 8px; fill: #909090; }

.status { height: 14px; display: flex; overflow: hidden; position: relative; }
.status > span { height: 22px; margin-top: 2px; padding: 1px 0 0 4px; border-left: 1px solid var(--line); }
.status .help { flex: 1; border: 0; padding-left: 2px; }
.s3 { width: 116px; }
.s2 { width: 102px; }
.s1 { width: 69px; }
.net { width: 148px; display: flex; gap: 4px; }
.net svg { width: 24px; height: 12px; margin-top: 1px; }
.sizer { width: 10px; height: 8px; position: absolute; right: 0; bottom: 0; }

.taskbar { height: 16px; display: flex; overflow: hidden; background: #0f0f0f; color: #fff; }
.taskbar button { width: 49px; height: 30px; flex: none; display: grid; place-items: center; padding-top: 9px; }
.taskbar svg { width: 22px; height: 22px; }
.taskbar .current { background: #3c3c3c; }
.taskbar time { margin-left: auto; padding-right: 38px; line-height: 20px; }
```
FILE: chart.js
```js
// Daily candles: [high, body top, body bottom, low, colour], in pixels below the top of the plot.
const candles = `145,160,166,176,r 163,165,208,214,r 219,220,223,227,g 210,220,259,262,r 171,193,259,265,g 181,192,215,254,r
198,214,300,324,r 282,299,306,312,r 302,303,309,314,r 287,309,312,322,r 300,311,328,332,r 301,318,328,330,g 265,281,319,324,g
280,280,311,321,r 302,305,310,310,r 272,283,307,310,g 280,283,299,312,r 269,276,299,303,g 274,276,299,315,r 288,298,307,311,r
295,295,306,308,g 280,296,314,326,r 306,313,355,371,r 313,336,355,357,g 326,331,337,358,g 324,330,349,358,r 356,357,363,367,r
342,361,395,428,r 368,393,413,417,r 350,364,412,416,g 334,342,366,366,g 341,341,378,387,r 373,375,381,383,g 357,376,389,395,r
377,386,389,403,g 381,388,403,414,r 396,401,440,449,r 428,438,453,460,r 449,452,455,458,g 439,450,464,468,r 463,464,477,482,g
438,443,463,477,g 441,443,461,477,r 455,460,467,485,r 458,465,467,468,r 437,467,478,484,r 470,471,481,482,g 473,473,657,743,r
576,597,650,676,g 525,532,602,610,g 524,529,532,540,g 502,506,532,549,g 486,504,518,537,r 498,518,520,544,r 518,521,532,555,r
485,488,531,548,g 481,486,490,490,r 465,489,491,516,r 453,473,490,558,g 443,449,473,503,g 392,410,450,485,g 397,409,425,431,r
422,424,436,437,r 415,421,436,445,g 402,410,422,447,g 346,357,411,411,g 336,339,358,376,g 303,312,340,353,g 307,314,316,316,g
313,314,340,346,r 315,339,362,375,r 345,361,369,375,r 359,368,377,392,r 349,359,377,398,g 358,361,363,364,g 326,356,362,363,g
346,356,385,399,r 382,384,392,409,r 378,391,396,430,r 382,395,400,405,r 395,397,401,402,g 380,397,400,405,r 378,384,400,405,g
354,379,385,386,g 364,379,418,424,r 386,387,418,434,g 375,376,382,383,g 364,368,377,382,g 308,318,369,384,g 296,316,319,328,g
300,316,320,330,r 306,316,320,340,g 303,307,315,317,g 264,272,308,317,g 228,244,273,285,g 194,208,245,259,g 187,205,209,231,g
176,198,207,213,g 189,190,193,200,g 185,190,220,227,r 203,219,225,244,r 219,224,226,241,r 220,225,260,272,r 259,259,308,322,r
318,318,325,328,r 203,214,325,342,g 214,214,284,313,r 171,204,284,285,g 166,190,205,218,g 183,188,191,216,g 183,185,188,191,g
183,185,205,230,r 194,200,205,212,g 193,200,260,269,r 250,259,282,328,r 272,281,290,314,r 280,284,285,293,r 270,284,285,311,r
248,262,285,298,g 247,262,287,294,r 278,286,318,325,r 281,317,320,338,r 304,308,315,319,r 252,276,315,318,g 249,260,277,301,g
223,237,261,264,g 231,237,266,275,r 245,265,278,295,r 275,275,280,283,g 271,275,279,295,r 262,278,298,306,r 273,285,298,300,g
265,272,286,294,g 229,249,273,274,g 244,244,250,253,g 230,242,245,253,g 238,242,263,266,r 253,262,263,270,r 261,262,282,289,r
278,281,287,288,r 282,284,287,289,g 280,284,288,291,r 276,287,307,313,r 297,306,308,319,r 302,307,336,340,r 316,325,336,340,g
322,324,326,329,g 307,315,325,326,g 285,287,317,331,g 274,281,288,291,g 268,281,288,296,r 246,251,288,305,g 265,281,285,285,g
279,281,295,305,r 285,293,336,337,r`.split(/\s+/).map(c => c.split(","));

const STEP = 8;
const box = (x, y, w, h) => `M${x} ${y}h${w}v${h}h${-w}z`;
const paths = { ink: "", r: "", g: "" };

candles.forEach(([high, top, bottom, low, colour], i) => {
  const x = i * STEP;
  // Separate boxes, all wound the same way, so overlaps stay filled.
  paths.ink += box(x, +high, 1, low - high) + box(x - 2, +top, 5, bottom - top);
  if (bottom - top > 2) paths[colour] += box(x - 1, +top + 1, 3, bottom - top - 2);
});

document.getElementById("ink").setAttribute("d", paths.ink);
document.getElementById("bear").setAttribute("d", paths.r);
document.getElementById("bull").setAttribute("d", paths.g);
```
